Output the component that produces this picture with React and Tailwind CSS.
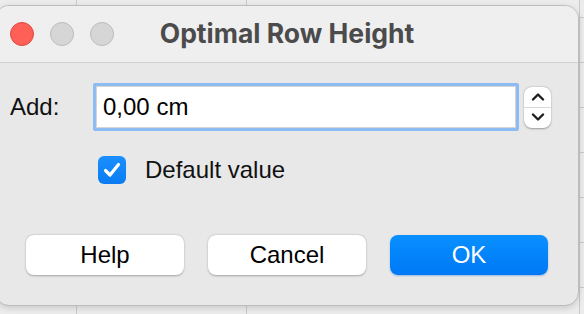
import React from 'react';

const rows = [18, 45, 45, 45, 45, 45, 45, 45];
const cols = [77, 170, 333, 40];

const Sheet = () => (
  <div className="flex flex-col">
    {rows.map((h, r) => (
      <div key={r} className="flex border-b border-[#c9c9c9]" style={{ height: h }}>
        {cols.map((w, c) => (
          <div key={c} className="shrink-0 border-r border-[#c9c9c9]" style={{ width: w }} />
        ))}
      </div>
    ))}
  </div>
);

const Light = ({ color }) => (
  <span className={`w-[24px] h-[24px] rounded-full border ${color}`} />
);

const Button = ({ children, primary }) => (
  <button
    className={
      primary
        ? 'w-[158px] h-[40px] rounded-[8px] bg-gradient-to-b from-[#0a90ff] to-[#0078f5] text-white text-[24px] leading-none shadow-[0_1px_2px_rgba(0,90,200,0.35)]'
        : 'w-[158px] h-[40px] rounded-[8px] bg-white text-black text-[24px] leading-none shadow-[0_0.5px_2px_rgba(0,0,0,0.3)]'
    }
  >
    {children}
  </button>
);

export default function App() {
  return (
    <div
      className="relative w-[584px] h-[314px] overflow-hidden bg-[#ececec]"
      style={{ fontFamily: '"Liberation Sans", Arial, sans-serif' }}
    >
      <Sheet />

      {/* dialog */}
      <div className="absolute left-[-5px] top-[5px] w-[584px] h-[301px] rounded-[14px] border border-[#bdbdbd] bg-[#e8e8e8] overflow-hidden flex flex-col shadow-[0_2px_6px_rgba(0,0,0,0.15)]">
        <div className="relative h-[57px] shrink-0 bg-[#efefef] border-b border-[#d0d0d0] flex items-center">
          <div className="flex gap-[16px] pl-[14px]">
            <Light color="bg-[#fe5f57] border-[#e2463f]" />
            <Light color="bg-[#d6d6d6] border-[#bcbcbc]" />
            <Light color="bg-[#d6d6d6] border-[#bcbcbc]" />
          </div>
          <div
            className="absolute inset-0 flex items-center justify-center text-[26.5px] font-bold text-[#4b4b4b]"
            style={{ fontFamily: 'Inter, "Liberation Sans", sans-serif' }}
          >
            Optimal Row Height
          </div>
        </div>

        <div className="flex flex-col pl-[14px] pt-[20px]">
          <div className="flex items-center">
            <span className="w-[83px] text-[24px] text-[#111]">Add:</span>
            <div className="w-[426px] h-[48px] bg-white border-[3px] border-[#8dbcf2] rounded-[2px] flex items-center pl-[7px] text-[24px] text-black shadow-[inset_0_0_0_1px_#d4d4d4]">
              0,00 cm
            </div>
            <div className="ml-[5px] w-[27px] h-[41px] rounded-[8px] bg-white shadow-[0_0.5px_2px_rgba(0,0,0,0.35)] flex flex-col">
              <div className="flex-1 flex items-center justify-center border-b border-[#d8d8d8]">
                <svg width="14" height="9" viewBox="0 0 14 9">
                  <path d="M2 7.5 L7 2.5 L12 7.5" fill="none" stroke="#1e1e1e" strokeWidth="2.4" strokeLinecap="round" strokeLinejoin="round" />
                </svg>
              </div>
              <div className="flex-1 flex items-center justify-center">
                <svg width="14" height="9" viewBox="0 0 14 9">
                  <path d="M2 1.5 L7 6.5 L12 1.5" fill="none" stroke="#1e1e1e" strokeWidth="2.4" strokeLinecap="round" strokeLinejoin="round" />
                </svg>
              </div>
            </div>
          </div>

          <div className="flex items-center mt-[21px] ml-[88px]">
            <span className="w-[28px] h-[28px] rounded-[6px] bg-gradient-to-b from-[#1a8fff] to-[#0a7cf2] flex items-center justify-center">
              <svg width="20" height="18" viewBox="0 0 20 18">
                <path d="M3.5 9.5 L8 14 L16.5 3.5" fill="none" stroke="#fff" strokeWidth="3.2" strokeLinecap="round" strokeLinejoin="round" />
              </svg>
            </span>
            <span className="ml-[19px] text-[24px] text-[#111]">Default value</span>
          </div>

          <div className="flex gap-[24px] mt-[47px] pl-[16px]">
            <Button>Help</Button>
            <Button>Cancel</Button>
            <Button primary>OK</Button>
          </div>
        </div>
      </div>
    </div>
  );
}
